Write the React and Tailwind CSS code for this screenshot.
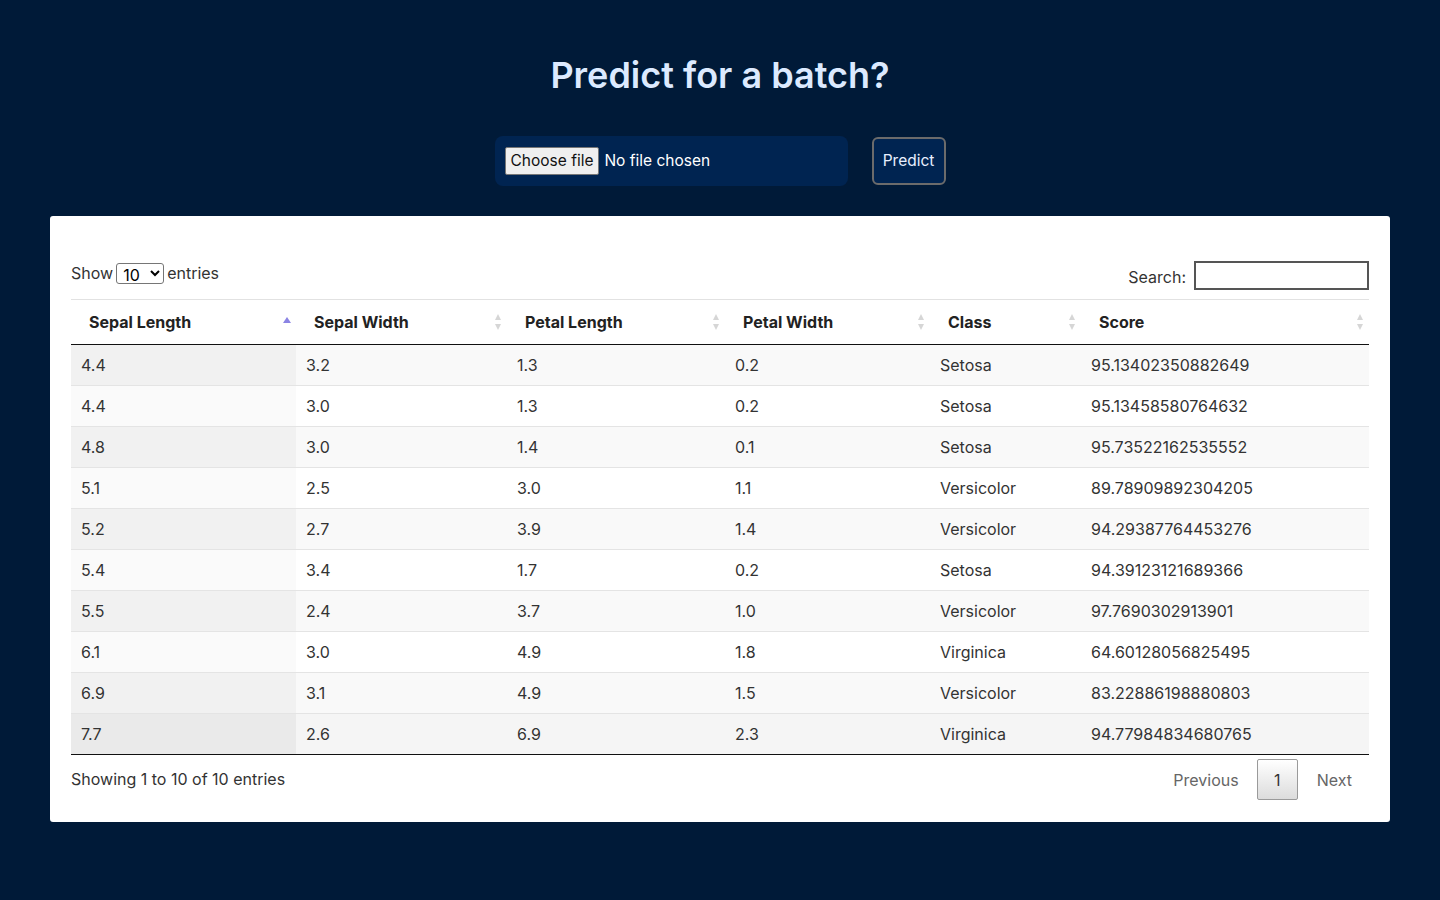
import React from 'react';

const rows = [
  ['4.4', '3.2', '1.3', '0.2', 'Setosa', '95.13402350882649'],
  ['4.4', '3.0', '1.3', '0.2', 'Setosa', '95.13458580764632'],
  ['4.8', '3.0', '1.4', '0.1', 'Setosa', '95.73522162535552'],
  ['5.1', '2.5', '3.0', '1.1', 'Versicolor', '89.78909892304205'],
  ['5.2', '2.7', '3.9', '1.4', 'Versicolor', '94.29387764453276'],
  ['5.4', '3.4', '1.7', '0.2', 'Setosa', '94.39123121689366'],
  ['5.5', '2.4', '3.7', '1.0', 'Versicolor', '97.7690302913901'],
  ['6.1', '3.0', '4.9', '1.8', 'Virginica', '64.60128056825495'],
  ['6.9', '3.1', '4.9', '1.5', 'Versicolor', '83.22886198880803'],
  ['7.7', '2.6', '6.9', '2.3', 'Virginica', '94.77984834680765'],
];

const columns = [
  { label: 'Sepal Length', width: 'w-[225px]', active: true },
  { label: 'Sepal Width', width: 'w-[211px]' },
  { label: 'Petal Length', width: 'w-[218px]' },
  { label: 'Petal Width', width: 'w-[205px]' },
  { label: 'Class', width: 'w-[151px]' },
  { label: 'Score', width: 'w-[288px]' },
];

function SortIcon({ active }) {
  if (active) {
    return (
      <svg width="8" height="6" viewBox="0 0 8 6" className="absolute right-[5px] top-[17px]">
        <path d="M4 0 L8 6 L0 6 Z" fill="#8b84e4" />
      </svg>
    );
  }
  return (
    <svg width="6" height="16" viewBox="0 0 6 16" className="absolute right-[6px] top-[14px]">
      <path d="M3 0 L6 6 L0 6 Z" fill="#d6d6d6" />
      <path d="M0 10 L6 10 L3 16 Z" fill="#d6d6d6" />
    </svg>
  );
}

function rowBg(i, j) {
  if (i === 9) return j === 0 ? 'bg-[#eaeaea]' : 'bg-[#f5f5f5]';
  if (i % 2 === 0) return j === 0 ? 'bg-[#f1f1f1]' : 'bg-[#f9f9f9]';
  return j === 0 ? 'bg-[#fafafa]' : 'bg-white';
}

export default function App() {
  return (
    <div className="min-h-[900px] bg-[#001a38] pt-[51px] font-['Inter',sans-serif] text-[16px]">
      <h1 className="text-center text-[36px] font-semibold leading-[48px] text-[#dceaff]">
        Predict for a batch?
      </h1>

      <div className="mt-[37px] flex items-center justify-center gap-[24px]">
        <div className="flex h-[50px] w-[353px] items-center rounded-lg bg-[#002451] px-[10px]">
          <span className="flex h-[28px] items-center rounded-[2px] border border-[#767676] bg-[#efefef] px-[5px] text-[15.5px] text-[#111]">
            Choose file
          </span>
          <span className="ml-[5px] text-[15.5px] text-white">No file chosen</span>
        </div>
        <button className="h-[48px] w-[74px] rounded-md border-2 border-[#6b6b6b] bg-[#002451] text-[15.5px] text-[#e8f0ff]">
          Predict
        </button>
      </div>

      <div className="mx-[50px] mt-[30px] rounded-[3px] bg-white px-[21px] pb-[22px] pt-[45px] text-[#333]">
        <div className="flex items-start justify-between">
          <div className="flex h-[24px] items-center leading-6">
            <span>Show</span>
            <select className="mx-[3px] h-[21px] w-[48px] rounded-[3px] border border-[#767676] bg-white pl-[2px] text-[16px] text-black">
              <option>10</option>
              <option>25</option>
              <option>50</option>
            </select>
            <span>entries</span>
          </div>
          <div className="flex items-center gap-[8px]">
            <span className="pt-[2px]">Search:</span>
            <input className="h-[29px] w-[175px] border-2 border-[#555] bg-white outline-none" />
          </div>
        </div>

        <table className="mt-[9px] w-full table-fixed border-collapse">
          <colgroup>
            {columns.map((c) => (
              <col key={c.label} className={c.width} />
            ))}
          </colgroup>
          <thead>
            <tr className="border-t border-b border-t-[#e2e2e2] border-b-[#111]">
              {columns.map((c) => (
                <th
                  key={c.label}
                  className="relative h-[45px] pl-[18px] pr-[20px] text-left font-bold text-[#222]"
                >
                  {c.label}
                  <SortIcon active={c.active} />
                </th>
              ))}
            </tr>
          </thead>
          <tbody>
            {rows.map((r, i) => (
              <tr
                key={i}
                className={i === 9 ? 'border-b border-[#111]' : 'border-b border-[#e4e4e4]'}
              >
                {r.map((v, j) => (
                  <td key={j} className={`h-[41px] px-[10px] text-[#333] ${rowBg(i, j)}`}>
                    {v}
                  </td>
                ))}
              </tr>
            ))}
          </tbody>
        </table>

        <div className="flex items-start justify-between">
          <div className="pt-[12px] leading-6">Showing 1 to 10 of 10 entries</div>
          <div className="mt-[4px] flex items-center">
            <span className="px-[18px] text-[#666]">Previous</span>
            <span className="flex h-[41px] w-[41px] items-center justify-center rounded-[2px] border border-[#9a9a9a] bg-gradient-to-b from-white to-[#dcdcdc] text-[#333]">
              1
            </span>
            <span className="pl-[19px] pr-[17px] text-[#666]">Next</span>
          </div>
        </div>
      </div>
    </div>
  );
}
